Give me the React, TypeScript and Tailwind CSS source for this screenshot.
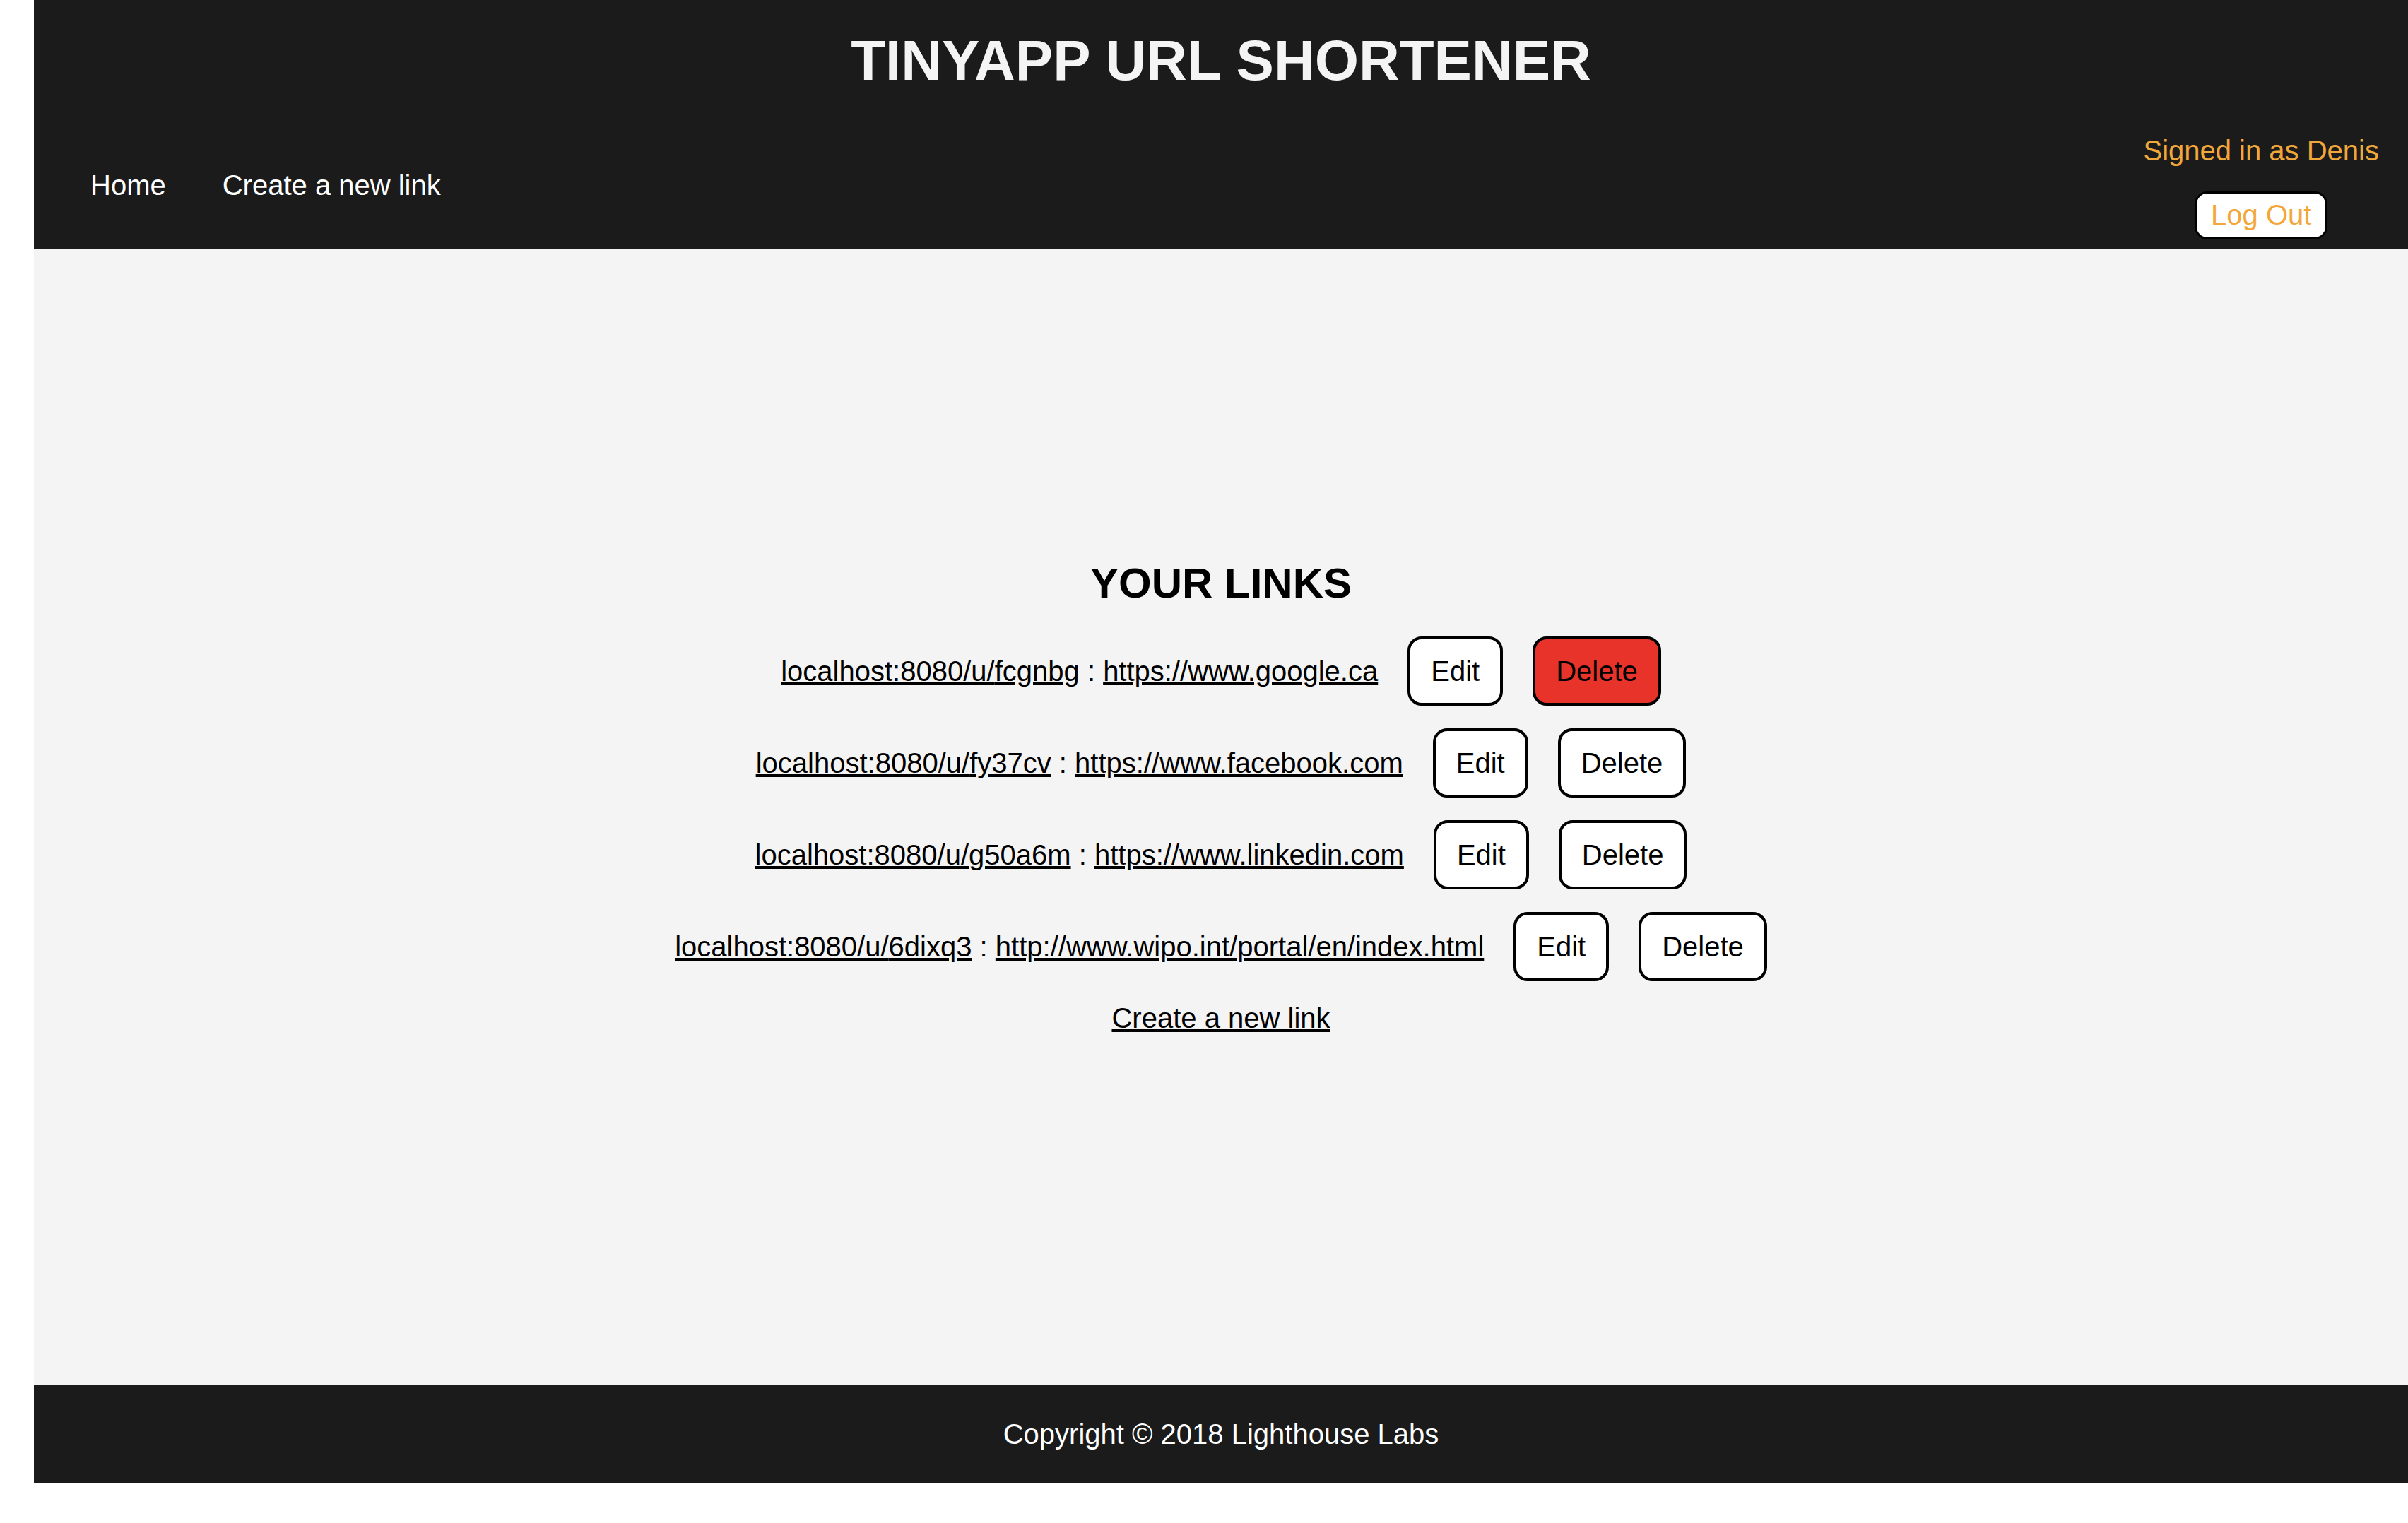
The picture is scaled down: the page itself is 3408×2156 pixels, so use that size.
import React from "react";

const links = [
  { short: "fcgnbg", long: "https://www.google.ca" },
  { short: "fy37cv", long: "https://www.facebook.com" },
  { short: "g50a6m", long: "https://www.linkedin.com" },
  { short: "6dixq3", long: "http://www.wipo.int/portal/en/index.html" },
];

function LinkRow({ short, long, active }: { short: string; long: string; active: boolean }) {
  return (
    <div className="flex items-center gap-[42px]">
      <p className="leading-none text-black">
        <a href="#" className="underline">
          localhost:8080/u/{short}
        </a>{" "}
        :{" "}
        <a href="#" className="underline">
          {long}
        </a>
      </p>
      <button className="px-[29px] py-[25px] leading-none bg-white border-4 border-black rounded-[20px] text-black">
        Edit
      </button>
      <button
        className={
          active
            ? "px-[29px] py-[25px] leading-none bg-[#e8332a] border-4 border-black rounded-[20px] text-black"
            : "px-[29px] py-[25px] leading-none bg-white border-4 border-black rounded-[20px] text-black"
        }
      >
        Delete
      </button>
    </div>
  );
}

export default function App() {
  return (
    <div
      className="min-h-[2156px] bg-white pl-[48px] text-[40px]"
      style={{ fontFamily: '"Liberation Sans", Arial, sans-serif' }}
    >
      <header className="h-[352px] bg-[#1b1b1b] flex flex-col">
        <h1 className="pt-[46px] text-center text-[80px] font-bold leading-none text-[#f4f4f4]">
          TINYAPP URL SHORTENER
        </h1>
        <div className="mt-[67px] flex justify-between pl-[80px] pr-[41px]">
          <nav className="mt-[49px] flex gap-[80px] leading-none text-white">
            <a href="#">Home</a>
            <a href="#">Create a new link</a>
          </nav>
          <div className="flex flex-col items-center">
            <p className="leading-none text-[#f2a73b]">Signed in as Denis</p>
            <button className="mt-[38px] px-[20px] pt-[10px] pb-[12px] leading-none bg-white border-[3px] border-black rounded-[18px] text-[#f2a73b]">
              Log Out
            </button>
          </div>
        </div>
      </header>

      <main className="h-[1608px] bg-[#f4f4f4] flex flex-col items-center pt-[444px]">
        <h2 className="text-[60px] font-bold leading-none text-black mb-[45px]">YOUR LINKS</h2>
        <div className="flex flex-col items-center gap-[32px]">
          {links.map((l, i) => (
            <LinkRow key={l.short} short={l.short} long={l.long} active={i === 0} />
          ))}
          <a href="#" className="underline leading-none text-black">
            Create a new link
          </a>
        </div>
      </main>

      <footer className="h-[140px] bg-[#1b1b1b] flex items-center justify-center">
        <p className="leading-none text-white">Copyright © 2018 Lighthouse Labs</p>
      </footer>
    </div>
  );
}
